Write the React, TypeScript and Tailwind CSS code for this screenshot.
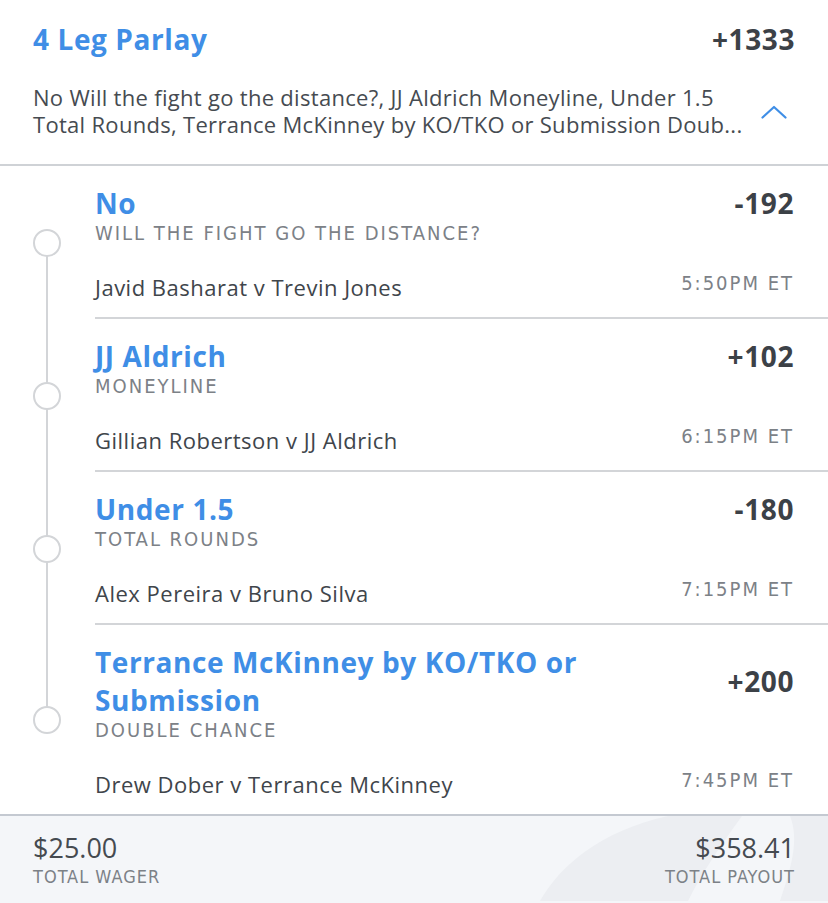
import React from "react";

const legs = [
  { title: ["No"], market: "WILL THE FIGHT GO THE DISTANCE?", odds: "-192", match: "Javid Basharat v Trevin Jones", time: "5:50PM ET" },
  { title: ["JJ Aldrich"], market: "MONEYLINE", odds: "+102", match: "Gillian Robertson v JJ Aldrich", time: "6:15PM ET" },
  { title: ["Under 1.5"], market: "TOTAL ROUNDS", odds: "-180", match: "Alex Pereira v Bruno Silva", time: "7:15PM ET" },
  { title: ["Terrance McKinney by KO/TKO or", "Submission"], market: "DOUBLE CHANCE", odds: "+200", match: "Drew Dober v Terrance McKinney", time: "7:45PM ET" },
];

const main = "font-['Open_Sans','Noto_Sans',sans-serif]";
const cond = "font-['Liberation_Sans_Narrow','DejaVu_Sans_Condensed',Roboto,sans-serif]";

export default function App() {
  return (
    <div className={`w-[828px] h-[903px] bg-white overflow-hidden flex flex-col ${main}`}>
      {/* Header */}
      <div className="px-[33px] pt-[20px] pb-[26px] border-b-2 border-[#cfd2d6]">
        <div className="flex justify-between items-center leading-[38px]">
          <span className="text-[28px] font-bold tracking-[0.6px] text-[#3f8ee6]">4 Leg Parlay</span>
          <span className="text-[28px] font-bold tracking-[0.6px] text-[#3c4147]">+1333</span>
        </div>
        <div className="mt-[26px] flex items-center justify-between">
          <div className="text-[22px] leading-[27px] tracking-[0.3px] text-[#464b51]">
            <div className="whitespace-nowrap">No Will the fight go the distance?, JJ Aldrich Moneyline, Under 1.5</div>
            <div className="whitespace-nowrap">Total Rounds, Terrance McKinney by KO/TKO or Submission Doub...</div>
          </div>
          <svg width="26" height="14" viewBox="0 0 26 14" className="mr-[8px] mt-[2px] shrink-0">
            <path d="M1.5 12.5 L13 2 L24.5 12.5" fill="none" stroke="#3f8ee6" strokeWidth="2.2" strokeLinecap="round" strokeLinejoin="round" />
          </svg>
        </div>
      </div>

      {/* Legs */}
      <div className="flex flex-col">
        {legs.map((leg, i) => {
          const first = i === 0;
          const last = i === legs.length - 1;
          return (
            <div key={i} className="flex">
              <div className="w-[95px] shrink-0 relative flex items-center">
                {!first && <div className="absolute left-[46px] top-0 h-1/2 w-[2px] bg-[#d3d5d8]" />}
                {!last && <div className="absolute left-[46px] top-1/2 bottom-0 w-[2px] bg-[#d3d5d8]" />}
                <div className="relative ml-[33px] w-[28px] h-[28px] rounded-full border-2 border-[#d3d5d8] bg-white" />
              </div>
              <div className={`flex-1 pr-[34px] pt-[18px] ${last ? "pb-[16px]" : "pb-[16px] border-b-2 border-[#d3d5d8]"}`}>
                <div className="flex justify-between items-center">
                  <div>
                    {leg.title.map((t, k) => (
                      <div key={k} className="text-[28px] font-bold leading-[38px] tracking-[0.6px] text-[#3f8ee6] whitespace-nowrap">{t}</div>
                    ))}
                  </div>
                  <span className="text-[28px] font-bold leading-[38px] tracking-[0.6px] text-[#3c4147]">{leg.odds}</span>
                </div>
                <div className={`${cond} text-[20px] leading-[22px] tracking-[2px] text-[#7c8187]`}>{leg.market}</div>
                <div className="mt-[29px] flex justify-between items-center h-[28px]">
                  <span className="text-[22px] leading-[28px] tracking-[0.5px] text-[#40454b]">{leg.match}</span>
                  <span className={`${cond} text-[20px] leading-[22px] tracking-[2px] text-[#7c8187] mb-[8px]`}>{leg.time}</span>
                </div>
              </div>
            </div>
          );
        })}
      </div>

      {/* Footer */}
      <div className="relative flex-1 bg-[#f4f6f9] border-t-2 border-[#c4c9d1] overflow-hidden">
        <svg className="absolute inset-0" width="828" height="85" viewBox="0 0 828 85">
          <path d="M540 85 C560 50 600 15 668 0 L742 0 C720 30 700 60 688 85 Z" fill="#eceef2" />
          <path d="M790 0 L828 0 L828 85 L780 85 C790 55 800 25 790 0 Z" fill="#eceef2" />
        </svg>
        <div className="relative flex justify-between px-[33px] pt-[17px]">
          <div>
            <div className="text-[27px] leading-[30px] text-[#454a50]">$25.00</div>
            <div className={`${cond} mt-[3px] text-[18px] leading-[22px] tracking-[1px] text-[#7c8187]`}>TOTAL WAGER</div>
          </div>
          <div className="text-right">
            <div className="text-[27px] leading-[30px] text-[#454a50]">$358.41</div>
            <div className={`${cond} mt-[3px] text-[18px] leading-[22px] tracking-[1px] text-[#7c8187]`}>TOTAL PAYOUT</div>
          </div>
        </div>
      </div>
    </div>
  );
}
